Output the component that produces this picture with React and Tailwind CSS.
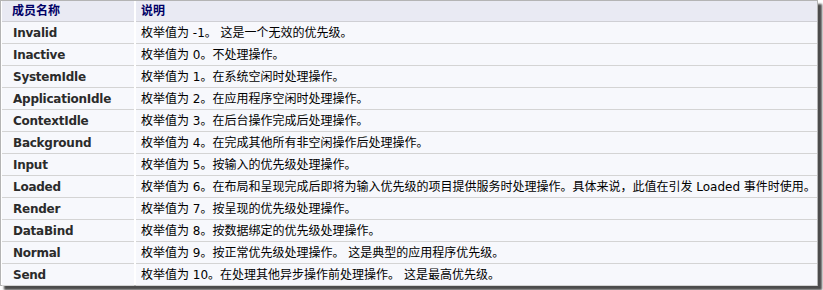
import React from 'react'

const rows = [
  ['Invalid', '枚举值为 -1。 这是一个无效的优先级。'],
  ['Inactive', '枚举值为 0。不处理操作。'],
  ['SystemIdle', '枚举值为 1。在系统空闲时处理操作。'],
  ['ApplicationIdle', '枚举值为 2。在应用程序空闲时处理操作。'],
  ['ContextIdle', '枚举值为 3。在后台操作完成后处理操作。'],
  ['Background', '枚举值为 4。在完成其他所有非空闲操作后处理操作。'],
  ['Input', '枚举值为 5。按输入的优先级处理操作。'],
  ['Loaded', '枚举值为 6。在布局和呈现完成后即将为输入优先级的项目提供服务时处理操作。具体来说，此值在引发 Loaded 事件时使用。'],
  ['Render', '枚举值为 7。按呈现的优先级处理操作。'],
  ['DataBind', '枚举值为 8。按数据绑定的优先级处理操作。'],
  ['Normal', '枚举值为 9。按正常优先级处理操作。 这是典型的应用程序优先级。'],
  ['Send', '枚举值为 10。在处理其他异步操作前处理操作。 这是最高优先级。'],
]

const font = { fontFamily: '"DejaVu Sans", "Noto Sans CJK SC", sans-serif' }

const App = () => {
  return (
    <div className="w-[823px] h-[290px] bg-white overflow-hidden" style={font}>
      {/* framed table with drop shadow */}
      <div className="w-[818px] h-[286px] border border-[#b4b4b4] bg-white pl-px shadow-[4px_4px_2px_rgba(0,0,0,0.7)]">
        <div className="grid grid-cols-[132px_1fr] gap-x-[2px] text-[12px] leading-none">
          {/* header */}
          <div className="h-[21px] bg-[#e9eaf3] border-b border-[#cfcfd4] flex items-center pl-[10px] font-bold text-[#000066]">
            成员名称
          </div>
          <div className="h-[21px] bg-[#e9eaf3] border-b border-[#cfcfd4] flex items-center pl-[5px] font-bold text-[#000066]">
            说明
          </div>

          {rows.map(([name, desc]) => (
            <React.Fragment key={name}>
              <div className="h-[22px] bg-[#f7f8fc] border-b border-[#d4d4d4] flex items-center pl-[11px] font-bold tracking-[-0.25px] text-[#2b2b2b]">
                {name}
              </div>
              <div className="h-[22px] bg-[#f7f8fc] border-b border-[#d4d4d4] flex items-center pl-[5px] text-black whitespace-nowrap">
                {desc}
              </div>
            </React.Fragment>
          ))}
        </div>
      </div>
    </div>
  )
}

export default App
